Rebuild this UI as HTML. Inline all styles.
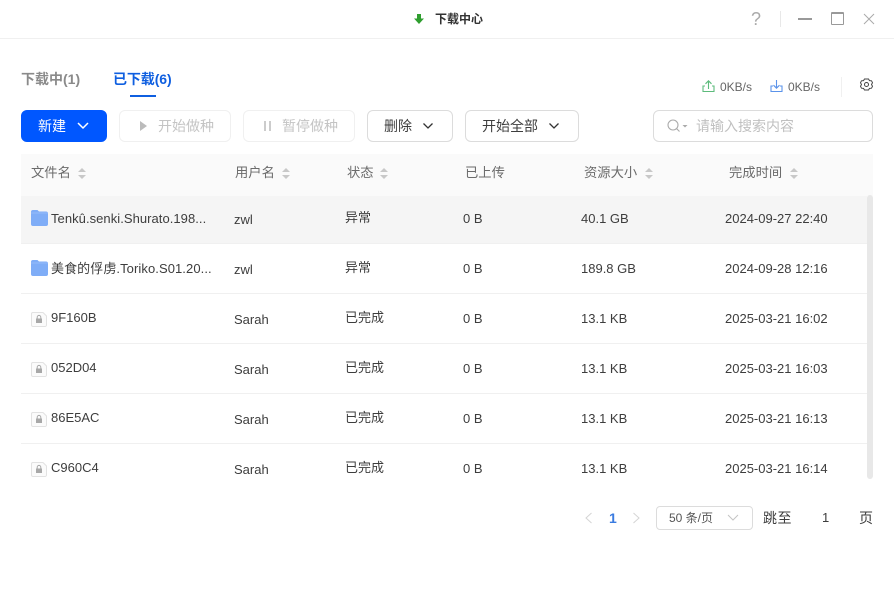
<!DOCTYPE html>
<html lang="zh"><head><meta charset="utf-8"><title>下载中心</title>
<style>
html,body{margin:0;padding:0;background:#fff}
#w{position:relative;width:894px;height:597px;overflow:hidden;background:#fff;font-family:"Liberation Sans","Noto Sans CJK SC",sans-serif;font-size:13px;color:#3d3d3d}
.t{position:absolute;white-space:nowrap;line-height:20px}
.b{position:absolute;box-sizing:border-box;height:32px;top:110px;border:1px solid #dcdcdc;border-radius:6px;background:#fff}
.d{border-color:#f0f0f0}
.line{position:absolute;left:21px;width:846px;height:1px;background:#f0f0f0}
.h{color:#6b6b6b;font-size:13.300px}
.z{font-size:14px}
svg{position:absolute;overflow:visible}
</style></head><body><div id="w">
<div style="position:absolute;left:0;top:38px;width:894px;height:1px;background:#f0f0f0"></div>
<svg style="left:413px;top:13px" width="12" height="12" viewBox="0 0 12 12"><path d="M4 1h4v4.500h3L6 11 1 5.500h3z" fill="#2f9e2f"/></svg>
<div class="t" style="left:435px;top:9px;font-size:12px;font-weight:bold;color:#333">下载中心</div>
<div class="t" style="left:751px;top:9px;font-size:18px;color:#aaa">?</div>
<div style="position:absolute;left:780px;top:11px;width:1px;height:16px;background:#e8e8e8"></div>
<div style="position:absolute;left:798px;top:18px;width:14px;height:1.500px;background:#999"></div>
<div style="position:absolute;box-sizing:border-box;left:831px;top:12px;width:13px;height:13px;border:1.500px solid #999;border-top-width:2px;border-radius:1px"></div>
<svg style="left:863px;top:13px" width="12" height="12" viewBox="0 0 12 12"><path d="M1 1l10 10M11 1L1 11" stroke="#aaa" stroke-width="1" fill="none"/></svg>

<div class="t" style="left:21px;top:69px;font-size:14px;font-weight:bold;color:#8a8a8a">下载中(1)</div>
<div class="t" style="left:113px;top:69px;font-size:14px;font-weight:bold;color:#0f5fe0;letter-spacing:-.1px">已下载(6)</div>
<div style="position:absolute;left:130px;top:95px;width:26px;height:2px;background:#0f5fe0"></div>

<svg style="left:702px;top:79px" width="13" height="14" viewBox="0 0 13 14" fill="none" stroke="#5dbb7c" stroke-width="1.100"><path d="M6.500 10V2M3.500 4.800l3-3 3 3M3 7H1v5.500h11V7h-2"/></svg>
<div class="t" style="left:720px;top:77px;font-size:12px;color:#666">0KB/s</div>
<svg style="left:770px;top:79px" width="13" height="14" viewBox="0 0 13 14" fill="none" stroke="#5b93ea" stroke-width="1.100"><path d="M6.500 1v8M3.500 6.200l3 3 3-3M3 7H1v5.500h11V7h-2"/></svg>
<div class="t" style="left:788px;top:77px;font-size:12px;color:#666">0KB/s</div>
<div style="position:absolute;left:841px;top:77px;width:1px;height:20px;background:#f0f0f0"></div>
<svg style="left:860px;top:78px" width="13" height="13" viewBox="0 0 13 13" fill="none" stroke="#444" stroke-width="1"><path d="M4.500 1h4l1 1.600 2 .2 1 1.900-1 1.800 1 1.800-1 1.900-2 .2-1 1.600h-4l-1-1.600-2-.2-1-1.900 1-1.800-1-1.800 1-1.900 2-.2z"/><circle cx="6.500" cy="6.500" r="2"/></svg>

<div class="b" style="left:21px;width:86px;background:#0057ff;border-color:#0057ff"></div>
<div class="t z" style="left:38px;top:116px;color:#fff">新建</div>
<svg style="left:77px;top:122px" width="12" height="8" viewBox="0 0 12 8" fill="none" stroke="#fff" stroke-width="1.500"><path d="M1 1l5 5 5-5"/></svg>
<div class="b d" style="left:119px;width:112px"></div>
<svg style="left:140px;top:121px" width="8" height="10" viewBox="0 0 8 10"><path d="M0 0l7 5-7 5z" fill="#bbb"/></svg>
<div class="t z" style="left:158px;top:116px;color:#c4c4c4">开始做种</div>
<div class="b d" style="left:243px;width:112px"></div>
<div style="position:absolute;left:264px;top:121px;width:1.500px;height:10px;background:#ccc"></div>
<div style="position:absolute;left:269px;top:121px;width:1.500px;height:10px;background:#ccc"></div>
<div class="t z" style="left:282px;top:116px;color:#c4c4c4">暂停做种</div>
<div class="b" style="left:367px;width:86px"></div>
<div class="t z" style="left:384px;top:116px">删除</div>
<svg style="left:423px;top:123px" width="10" height="7" viewBox="0 0 10 7" fill="none" stroke="#333" stroke-width="1.300"><path d="M.5.500l4.500 4.500L9.500.500"/></svg>
<div class="b" style="left:465px;width:114px"></div>
<div class="t z" style="left:482px;top:116px">开始全部</div>
<svg style="left:549px;top:123px" width="10" height="7" viewBox="0 0 10 7" fill="none" stroke="#333" stroke-width="1.300"><path d="M.5.500l4.500 4.500L9.500.500"/></svg>
<div class="b" style="left:653px;width:220px"></div>
<svg style="left:667px;top:119px" width="22" height="14" viewBox="0 0 22 14" fill="none" stroke="#aaa" stroke-width="1.100"><circle cx="6" cy="6" r="5"/><path d="M9.500 9.500l3 3"/><path d="M15.500 6h5l-2.500 2.500z" fill="#aaa" stroke="none"/></svg>
<div class="t z" style="left:696px;top:116px;color:#c0c0c0">请输入搜索内容</div>

<div style="position:absolute;left:21px;top:154px;width:852px;height:42px;background:#fafafa"></div>
<div class="t h" style="left:31px;top:163px">文件名</div>
<div class="t h" style="left:235px;top:163px">用户名</div>
<div class="t h" style="left:347px;top:163px">状态</div>
<div class="t h" style="left:465px;top:163px">已上传</div>
<div class="t h" style="left:584px;top:163px">资源大小</div>
<div class="t h" style="left:729px;top:163px">完成时间</div>
<svg style="left:0;top:0" width="894" height="200" fill="#c8c8c8">
<path d="M78 172l4-4 4 4zM78 175l4 4 4-4z"/>
<path d="M282 172l4-4 4 4zM282 175l4 4 4-4z"/>
<path d="M380 172l4-4 4 4zM380 175l4 4 4-4z"/>
<path d="M645 172l4-4 4 4zM645 175l4 4 4-4z"/>
<path d="M790 172l4-4 4 4zM790 175l4 4 4-4z"/>
</svg>

<div style="position:absolute;left:21px;top:196px;width:846px;height:47px;background:#f5f5f5"></div>
<div class="line" style="top:243px"></div><div class="line" style="top:293px"></div><div class="line" style="top:343px"></div><div class="line" style="top:393px"></div><div class="line" style="top:443px"></div>
<div style="position:absolute;left:867px;top:195px;width:6px;height:284px;background:#e8e8e8;border-radius:3px"></div>

<svg style="left:31px;top:210px" width="17" height="16" viewBox="0 0 17 16"><path d="M2 0h4.500l1.500 1.500h7a2 2 0 012 2V14a2 2 0 01-2 2H2a2 2 0 01-2-2V2a2 2 0 012-2z" fill="#7fadf7"/><path d="M0 3h17" stroke="#9cc0fa" stroke-width=".8"/></svg>
<div class="t" style="left:51px;top:209px;letter-spacing:.05px">Tenkû.senki.Shurato.198...</div>
<svg style="left:31px;top:260px" width="17" height="16" viewBox="0 0 17 16"><path d="M2 0h4.500l1.500 1.500h7a2 2 0 012 2V14a2 2 0 01-2 2H2a2 2 0 01-2-2V2a2 2 0 012-2z" fill="#7fadf7"/><path d="M0 3h17" stroke="#9cc0fa" stroke-width=".8"/></svg>
<div class="t" style="left:51px;top:259px;letter-spacing:.08px">美食的俘虏.Toriko.S01.20...</div>
<svg style="left:31px;top:312px" width="16" height="15" viewBox="0 0 16 15"><path d="M1.500.500H12L15.500 4v9a1.500 1.500 0 01-1.500 1.500H2A1.500 1.500 0 01.500 13V2A1.500 1.500 0 011.500.500z" fill="#fbfbfb" stroke="#e2e2e2"/><rect x="5" y="6.500" width="6" height="4.500" fill="#a8a8a8"/><path d="M6.200 6.500V5.200a1.800 1.800 0 013.600 0v1.300" fill="none" stroke="#a8a8a8"/></svg>
<div class="t" style="left:51px;top:308px">9F160B</div>
<svg style="left:31px;top:362px" width="16" height="15" viewBox="0 0 16 15"><path d="M1.500.500H12L15.500 4v9a1.500 1.500 0 01-1.500 1.500H2A1.500 1.500 0 01.500 13V2A1.500 1.500 0 011.500.500z" fill="#fbfbfb" stroke="#e2e2e2"/><rect x="5" y="6.500" width="6" height="4.500" fill="#a8a8a8"/><path d="M6.200 6.500V5.200a1.800 1.800 0 013.600 0v1.300" fill="none" stroke="#a8a8a8"/></svg>
<div class="t" style="left:51px;top:358px">052D04</div>
<svg style="left:31px;top:412px" width="16" height="15" viewBox="0 0 16 15"><path d="M1.500.500H12L15.500 4v9a1.500 1.500 0 01-1.500 1.500H2A1.500 1.500 0 01.500 13V2A1.500 1.500 0 011.500.500z" fill="#fbfbfb" stroke="#e2e2e2"/><rect x="5" y="6.500" width="6" height="4.500" fill="#a8a8a8"/><path d="M6.200 6.500V5.200a1.800 1.800 0 013.600 0v1.300" fill="none" stroke="#a8a8a8"/></svg>
<div class="t" style="left:51px;top:408px">86E5AC</div>
<svg style="left:31px;top:462px" width="16" height="15" viewBox="0 0 16 15"><path d="M1.500.500H12L15.500 4v9a1.500 1.500 0 01-1.500 1.500H2A1.500 1.500 0 01.500 13V2A1.500 1.500 0 011.500.500z" fill="#fbfbfb" stroke="#e2e2e2"/><rect x="5" y="6.500" width="6" height="4.500" fill="#a8a8a8"/><path d="M6.200 6.500V5.200a1.800 1.800 0 013.600 0v1.300" fill="none" stroke="#a8a8a8"/></svg>
<div class="t" style="left:51px;top:458px">C960C4</div>

<div class="t" style="left:234px;top:210px">zwl</div><div class="t" style="left:234px;top:260px">zwl</div>
<div class="t" style="left:234px;top:310px">Sarah</div><div class="t" style="left:234px;top:360px">Sarah</div><div class="t" style="left:234px;top:410px">Sarah</div><div class="t" style="left:234px;top:460px">Sarah</div>
<div class="t" style="left:345px;top:208px">异常</div><div class="t" style="left:345px;top:258px">异常</div>
<div class="t" style="left:345px;top:308px">已完成</div><div class="t" style="left:345px;top:358px">已完成</div><div class="t" style="left:345px;top:408px">已完成</div><div class="t" style="left:345px;top:458px">已完成</div>
<div class="t" style="left:463px;top:209px">0 B</div><div class="t" style="left:463px;top:259px">0 B</div><div class="t" style="left:463px;top:309px">0 B</div><div class="t" style="left:463px;top:359px">0 B</div><div class="t" style="left:463px;top:409px">0 B</div><div class="t" style="left:463px;top:459px">0 B</div>
<div class="t" style="left:581px;top:209px">40.1 GB</div><div class="t" style="left:581px;top:259px">189.8 GB</div><div class="t" style="left:581px;top:309px">13.1 KB</div><div class="t" style="left:581px;top:359px">13.1 KB</div><div class="t" style="left:581px;top:409px">13.1 KB</div><div class="t" style="left:581px;top:459px">13.1 KB</div>
<div class="t" style="left:725px;top:209px">2024-09-27 22:40</div><div class="t" style="left:725px;top:259px">2024-09-28 12:16</div><div class="t" style="left:725px;top:309px">2025-03-21 16:02</div><div class="t" style="left:725px;top:359px">2025-03-21 16:03</div><div class="t" style="left:725px;top:409px">2025-03-21 16:13</div><div class="t" style="left:725px;top:459px">2025-03-21 16:14</div>

<svg style="left:584px;top:512px" width="9" height="12" viewBox="0 0 9 12" fill="none" stroke="#d4d4d4" stroke-width="1"><path d="M7.500 1L2 6l5.500 5"/></svg>
<div class="t" style="left:609px;top:508px;color:#3a7be0;font-weight:bold;font-size:14px">1</div>
<svg style="left:632px;top:512px" width="9" height="12" viewBox="0 0 9 12" fill="none" stroke="#d4d4d4" stroke-width="1"><path d="M1.500 1L7 6l-5.500 5"/></svg>
<div class="b" style="left:656px;top:506px;width:97px;height:24px;border-radius:4px"></div>
<div class="t" style="left:669px;top:508px;font-size:12px;color:#555">50 条/页</div>
<svg style="left:727px;top:514px" width="12" height="8" viewBox="0 0 12 8" fill="none" stroke="#c4c4c4" stroke-width="1"><path d="M1 1l5 5 5-5"/></svg>
<div class="t z" style="left:763px;top:508px;letter-spacing:.5px">跳至</div>
<div class="t" style="left:822px;top:508px">1</div>
<div class="t z" style="left:859px;top:508px">页</div>
</div></body></html>
